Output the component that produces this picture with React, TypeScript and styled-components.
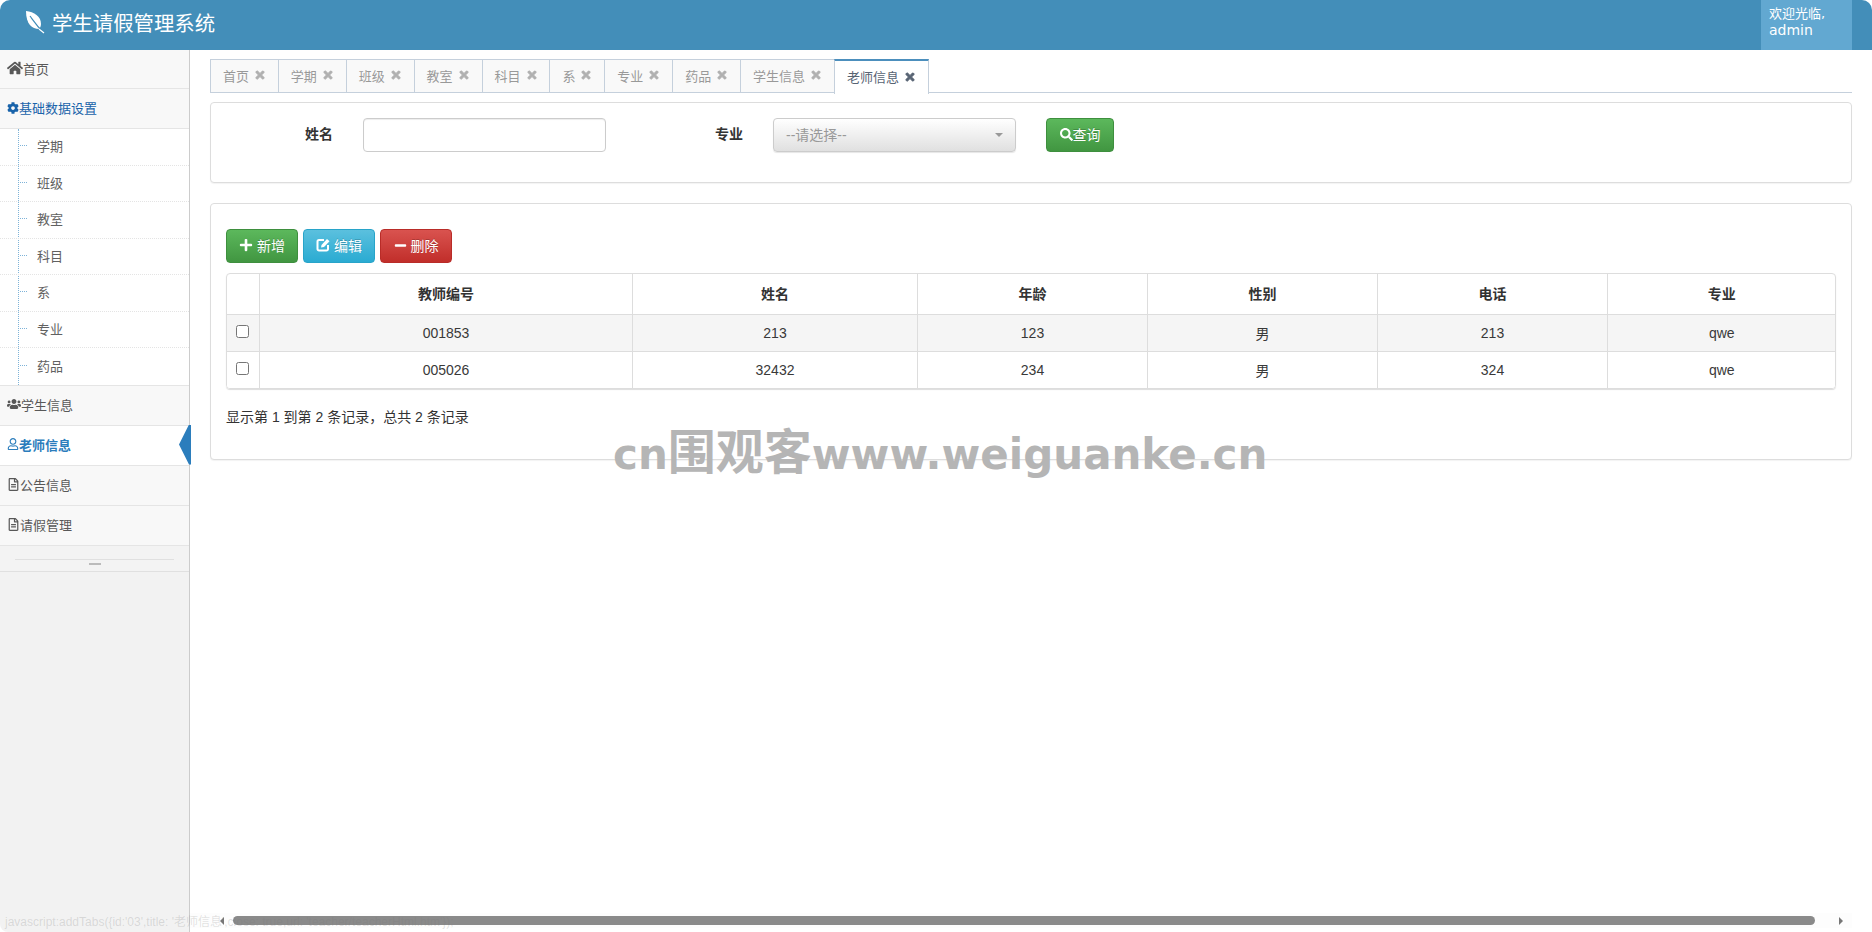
import React from "react";
import styled, { createGlobalStyle } from "styled-components";
import {
  FaHome,
  FaCog,
  FaUsers,
  FaRegUser,
  FaRegFileAlt,
  FaTimes,
  FaPlus,
  FaMinus,
  FaSearch,
} from "react-icons/fa";

const GlobalStyle = createGlobalStyle`
  html, body {
    margin: 0;
    padding: 0;
    height: 100%;
    background: #fff;
    overflow: hidden;
  }
  body {
    font-family: "Liberation Sans", "Noto Sans CJK SC", sans-serif;
    font-size: 13px;
    color: #393939;
  }
  * {
    box-sizing: border-box;
  }
`;

const Page = styled.div`
  position: relative;
  height: 932px;
  display: flex;
  flex-direction: column;
  overflow: hidden;
  border-radius: 10px 10px 8px 8px;
`;

const Navbar = styled.header`
  height: 50px;
  flex: none;
  background: #438eb9;
  display: flex;
  align-items: center;
  padding-left: 25px;
  padding-right: 20px;
  color: #fff;
`;

const Brand = styled.div`
  display: flex;
  align-items: center;
  gap: 7px;
  font-size: 20.4px;
  flex: 1;
  padding-bottom: 6px;
`;

const UserBox = styled.div`
  width: 91px;
  height: 50px;
  background: #62a8d1;
  padding: 6px 0 0 8px;
  font-family: "DejaVu Sans", "Noto Sans CJK SC", sans-serif;
  font-size: 13px;
  line-height: 16px;
`;

const UserName = styled.span`
  font-size: 14px;
`;

const Body = styled.div`
  flex: 1;
  display: flex;
  min-height: 0;
`;

const Sidebar = styled.aside`
  width: 190px;
  flex: none;
  background: #f2f2f2;
  border-right: 1px solid #ccc;
`;

const MenuItem = styled.div<{ $active?: boolean; $open?: boolean }>`
  position: relative;
  height: 40px;
  display: flex;
  align-items: center;
  padding: 0 0 2px 7px;
  background: ${(p) => (p.$active ? "#fff" : "#f8f8f8")};
  border-bottom: 1px solid #e5e5e5;
  color: ${(p) => (p.$active ? "#2b7dbc" : p.$open ? "#1963aa" : "#585858")};
  font-weight: ${(p) => (p.$active ? 600 : 400)};
  font-size: 13px;
  &:first-child {
    height: 39px;
  }
`;

const ActiveArrow = styled.span`
  position: absolute;
  right: -2px;
  top: -1px;
  width: 12px;
  height: 40px;
  background: #2b7dbc;
  clip-path: polygon(0 50%, 10px 0, 100% 0, 100% 100%, 10px 100%);
`;

const SubMenu = styled.div`
  position: relative;
  background: #fff;
  border-bottom: 1px solid #e5e5e5;
  &::before {
    content: "";
    position: absolute;
    left: 18px;
    top: 0;
    bottom: 0;
    border-left: 1px dotted #7eb3d8;
  }
`;

const SubItem = styled.div`
  position: relative;
  height: 36.5px;
  display: flex;
  align-items: center;
  padding: 0 0 2px 37px;
  color: #616161;
  border-bottom: 1px dotted #e4e4e4;
  &:last-child {
    border-bottom: none;
  }
  &::before {
    content: "";
    position: absolute;
    left: 20px;
    top: 46%;
    width: 7px;
    border-top: 1px dotted #7eb3d8;
  }
`;

const Collapse = styled.div`
  position: relative;
  height: 26px;
  background: #f3f3f3;
  border-bottom: 1px solid #e0e0e0;
  &::before {
    content: "";
    position: absolute;
    left: 15px;
    right: 15px;
    top: 13px;
    border-top: 1px solid #e0e0e0;
  }
  &::after {
    content: "";
    position: absolute;
    left: 89px;
    top: 17px;
    width: 12px;
    height: 2px;
    background: #bbb;
  }
`;

const Main = styled.main`
  flex: 1;
  min-width: 0;
  display: flex;
  flex-direction: column;
`;

const Content = styled.div`
  flex: 1;
  padding: 9px 20px 0 20px;
`;

const TabBar = styled.div`
  display: flex;
  height: 34px;
  border-bottom: 1px solid #c5d0dc;
`;

const Tab = styled.div<{ $active?: boolean }>`
  height: ${(p) => (p.$active ? "35px" : "34px")};
  margin-left: -1px;
  &:first-child {
    margin-left: 0;
  }
  display: flex;
  align-items: center;
  gap: 5px;
  padding: 0 11.95px 2px;
  border: 1px solid #c5d0dc;
  border-top: ${(p) => (p.$active ? "2px solid #4c8fbd" : "1px solid #c5d0dc")};
  border-bottom: ${(p) => (p.$active ? "none" : "1px solid #c5d0dc")};
  background: ${(p) => (p.$active ? "#fff" : "#f9f9f9")};
  color: ${(p) => (p.$active ? "#576373" : "#999")};
  white-space: nowrap;
  svg {
    color: ${(p) => (p.$active ? "#576373" : "#b0b0b0")};
    stroke: currentColor;
    stroke-width: 40;
  }
`;

const Card = styled.section`
  border: 1px solid #ddd;
  border-radius: 4px;
  background: #fff;
  box-shadow: 0 1px 1px rgba(0, 0, 0, 0.05);
`;

const SearchCard = styled(Card)`
  margin-top: 9px;
  height: 81px;
  padding-top: 15px;
  display: flex;
  align-items: flex-start;
`;

const FieldLabel = styled.label<{ $width: number }>`
  width: ${(p) => p.$width}px;
  height: 32px;
  flex: none;
  text-align: right;
  line-height: 32px;
  font-size: 14px;
  font-weight: 700;
  color: #333;
  padding-right: 30px;
`;

const TextInput = styled.input`
  width: 243px;
  height: 34px;
  flex: none;
  border: 1px solid #ccc;
  border-radius: 4px;
  box-shadow: inset 0 1px 1px rgba(0, 0, 0, 0.075);
  background: #fff;
  outline: none;
`;

const SelectBox = styled.div`
  width: 243px;
  height: 34px;
  flex: none;
  border: 1px solid #ccc;
  border-radius: 4px;
  background: linear-gradient(to bottom, #fff 0%, #e0e0e0 100%);
  box-shadow: 0 1px 1px rgba(0, 0, 0, 0.1);
  color: #999;
  font-size: 14px;
  display: flex;
  align-items: center;
  justify-content: space-between;
  padding: 0 12px 2px;
`;

const Caret = styled.span`
  width: 0;
  height: 0;
  margin-top: 2px;
  border-left: 4px solid transparent;
  border-right: 4px solid transparent;
  border-top: 4px solid #999;
`;

const Btn = styled.button<{ $from: string; $to: string; $border: string }>`
  height: 34px;
  border: 1px solid ${(p) => p.$border};
  border-radius: 4px;
  background: linear-gradient(to bottom, ${(p) => p.$from} 0%, ${(p) => p.$to} 100%);
  color: #fff;
  font-family: inherit;
  font-size: 14px;
  display: inline-flex;
  align-items: center;
  justify-content: center;
  padding: 0 0 2px;
  text-shadow: 0 -1px 0 rgba(0, 0, 0, 0.2);
`;

const QueryBtn = styled(Btn)`
  width: 68px;
  margin-left: 30px;
`;

const ToolBtn = styled(Btn)`
  width: 72px;
  gap: 4px;
`;

const TableCard = styled(Card)`
  margin-top: 20px;
  height: 257px;
  padding: 25px 15px 0 15px;
`;

const Toolbar = styled.div`
  display: flex;
  gap: 5px;
  margin-bottom: 10px;
`;

const TableWrap = styled.div`
  border: 1px solid #ddd;
  border-radius: 4px;
  box-shadow: 0 1px 1px #ddd;
  overflow: hidden;
`;

const Table = styled.table`
  width: 100%;
  table-layout: fixed;
  border-collapse: collapse;
`;

const Th = styled.th<{ $width?: number }>`
  width: ${(p) => (p.$width ? `${p.$width}px` : "auto")};
  height: 40px;
  border-left: 1px solid #ddd;
  border-bottom: 1px solid #ddd;
  text-align: center;
  color: #333;
  font-size: 14px;
  padding: 0 0 2px 1px;
  &:first-child {
    border-left: none;
  }
`;

const Tr = styled.tr<{ $striped?: boolean }>`
  background: ${(p) => (p.$striped ? "#f5f5f5" : "#fff")};
`;

const Td = styled.td`
  height: 37px;
  padding: 0 0 0 1px;
  border-left: 1px solid #ddd;
  border-bottom: 1px solid #ddd;
  text-align: center;
  color: #393939;
  font-size: 14px;
  &:first-child {
    border-left: none;
  }
  tr:last-child & {
    border-bottom: none;
  }
`;

const CheckCell = styled.input`
  margin: 0 2px 3px 0;
  vertical-align: middle;
`;

const Summary = styled.div`
  margin-top: 19px;
  line-height: 18px;
  font-size: 14px;
  color: #333;
`;

const ScrollTrack = styled.div`
  height: 15px;
  flex: none;
  margin: 0 20px 4px 0;
  display: flex;
  align-items: center;
  padding: 0 9px 0 30px;
  background: #fdfdfd;
`;

const ScrollArrow = styled.span<{ $dir: "left" | "right" }>`
  width: 0;
  height: 0;
  flex: none;
  border-top: 4px solid transparent;
  border-bottom: 4px solid transparent;
  border-left: ${(p) => (p.$dir === "right" ? "4px solid #777" : "none")};
  border-right: ${(p) => (p.$dir === "left" ? "4px solid #777" : "none")};
`;

const ScrollThumb = styled.div`
  flex: 1;
  height: 9px;
  margin: 0 24px 0 9px;
  border-radius: 5px;
  background: #8a8a8a;
`;

const StatusHint = styled.div`
  position: absolute;
  left: 5px;
  bottom: 3px;
  color: rgba(120, 120, 120, 0.22);
  font-size: 12px;
  white-space: nowrap;
`;

const Watermark = styled.div`
  position: absolute;
  left: 613px;
  top: 427px;
  font-family: "DejaVu Sans", "Noto Sans CJK SC", sans-serif;
  font-weight: 700;
  font-size: 42px;
  line-height: 50px;
  color: #b5b5b5;
  white-space: nowrap;
`;

const WatermarkCjk = styled.span`
  font-size: 48px;
`;

const Leaf = () => (
  <svg width="20" height="24" viewBox="0 0 20 24" fill="none">
    <path
      d="M1 1 C9 2 16 6 16 14 C16 16 15 18 14 19 C7 19 1 14 1 1 Z"
      fill="#fff"
    />
    <path d="M5 6 C8 10 11 15 19 23" stroke="#438eb9" strokeWidth="1.2" />
    <path d="M14 19 L19 23" stroke="#fff" strokeWidth="1.2" />
  </svg>
);

const EditIcon = () => (
  <svg width="14" height="14" viewBox="0 0 14 14" fill="none">
    <path
      d="M8 2 H3 A1.5 1.5 0 0 0 1.5 3.5 V11 A1.5 1.5 0 0 0 3 12.5 H10.5 A1.5 1.5 0 0 0 12 11 V7"
      stroke="#fff"
      strokeWidth="2"
    />
    <path d="M5 9.5 L5.5 7 L11 1 L13.5 3.2 L8 9 Z" fill="#fff" />
  </svg>
);

const subItems = ["学期", "班级", "教室", "科目", "系", "专业", "药品"];
const tabs = ["首页", "学期", "班级", "教室", "科目", "系", "专业", "药品", "学生信息"];
const rows = [
  ["001853", "213", "123", "男", "213", "qwe"],
  ["005026", "32432", "234", "男", "324", "qwe"],
];

export default function App() {
  return (
    <Page>
      <GlobalStyle />
      <Navbar>
        <Brand>
          <Leaf />
          学生请假管理系统
        </Brand>
        <UserBox>
          欢迎光临,
          <br />
          <UserName>admin</UserName>
        </UserBox>
      </Navbar>
      <Body>
        <Sidebar>
          <MenuItem>
            <FaHome size={16} />
            首页
          </MenuItem>
          <MenuItem $open>
            <FaCog size={12} />
            基础数据设置
          </MenuItem>
          <SubMenu>
            {subItems.map((s) => (
              <SubItem key={s}>{s}</SubItem>
            ))}
          </SubMenu>
          <MenuItem>
            <FaUsers size={14} />
            学生信息
          </MenuItem>
          <MenuItem $active>
            <FaRegUser size={12} />
            老师信息
            <ActiveArrow />
          </MenuItem>
          <MenuItem>
            <FaRegFileAlt size={13} />
            公告信息
          </MenuItem>
          <MenuItem>
            <FaRegFileAlt size={13} />
            请假管理
          </MenuItem>
          <Collapse />
        </Sidebar>
        <Main>
          <Content>
            <TabBar>
              {tabs.map((t) => (
                <Tab key={t}>
                  {t}
                  <FaTimes size={12} />
                </Tab>
              ))}
              <Tab $active>
                老师信息
                <FaTimes size={12} />
              </Tab>
            </TabBar>
            <SearchCard>
              <FieldLabel $width={152}>姓名</FieldLabel>
              <TextInput />
              <FieldLabel $width={167}>专业</FieldLabel>
              <SelectBox>
                --请选择--
                <Caret />
              </SelectBox>
              <QueryBtn $from="#5cb85c" $to="#419641" $border="#3e8f3e">
                <FaSearch size={13} />
                查询
              </QueryBtn>
            </SearchCard>
            <TableCard>
              <Toolbar>
                <ToolBtn $from="#5cb85c" $to="#419641" $border="#3e8f3e">
                  <FaPlus size={14} />
                  新增
                </ToolBtn>
                <ToolBtn $from="#5bc0de" $to="#2aabd2" $border="#28a4c9">
                  <EditIcon />
                  编辑
                </ToolBtn>
                <ToolBtn $from="#d9534f" $to="#c12e2a" $border="#b92c28">
                  <FaMinus size={13} />
                  删除
                </ToolBtn>
              </Toolbar>
              <TableWrap>
                <Table>
                  <thead>
                    <tr>
                      <Th $width={32} />
                      <Th $width={373}>教师编号</Th>
                      <Th $width={285}>姓名</Th>
                      <Th $width={230}>年龄</Th>
                      <Th $width={230}>性别</Th>
                      <Th $width={230}>电话</Th>
                      <Th>专业</Th>
                    </tr>
                  </thead>
                  <tbody>
                    {rows.map((r, i) => (
                      <Tr key={r[0]} $striped={i === 0}>
                        <Td>
                          <CheckCell type="checkbox" />
                        </Td>
                        {r.map((v, j) => (
                          <Td key={j}>{v}</Td>
                        ))}
                      </Tr>
                    ))}
                  </tbody>
                </Table>
              </TableWrap>
              <Summary>显示第 1 到第 2 条记录，总共 2 条记录</Summary>
            </TableCard>
          </Content>
          <ScrollTrack>
            <ScrollArrow $dir="left" />
            <ScrollThumb />
            <ScrollArrow $dir="right" />
          </ScrollTrack>
        </Main>
      </Body>
      <Watermark>
        cn<WatermarkCjk>围观客</WatermarkCjk>www.weiguanke.cn
      </Watermark>
      <StatusHint>javascript:addTabs({"{"}id:'03',title: '老师信息',close: true,url: 'teacher/teacherHtml.htm'{"}"});</StatusHint>
    </Page>
  );
}
